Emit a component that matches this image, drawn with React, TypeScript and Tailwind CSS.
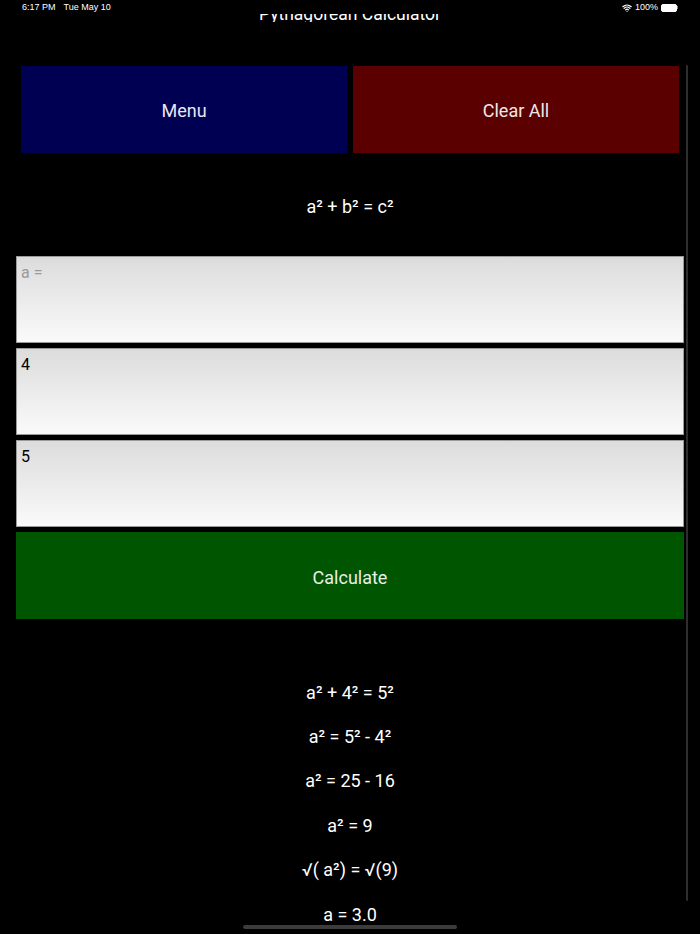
import { Wifi } from "lucide-react";

const steps = ["a² + 4² = 5²", "a² = 5² - 4²", "a² = 25 - 16", "a² = 9", "√( a²) = √(9)", "a = 3.0"];

const fieldClass =
  "h-[87px] w-full border border-[#9a9a9a] bg-gradient-to-b from-[#dcdcdc] to-[#fafafa] px-[4px] pt-[6px] text-[16px] leading-[19px]";

function StatusBar() {
  return (
    <div className="flex h-[14px] items-center justify-between pl-[22px] pr-[22px] pt-[1px] font-['Liberation_Sans',sans-serif] text-[9px] text-white">
      <div className="flex gap-[8px]">
        <span>6:17 PM</span>
        <span>Tue May 10</span>
      </div>
      <div className="flex items-center gap-[3px]">
        <Wifi size={10} strokeWidth={3} />
        <span>100%</span>
        <div className="flex items-center">
          <div className="h-[8px] w-[16px] rounded-[2px] border border-white bg-white" />
          <div className="h-[3px] w-[1px] bg-[#888]" />
        </div>
      </div>
    </div>
  );
}

export default function App() {
  return (
    <div className="relative h-[934px] w-[700px] overflow-hidden bg-black font-['Roboto',sans-serif] text-white">
      <StatusBar />

      {/* title is scrolled under the status bar */}
      <div className="h-[8px] overflow-hidden">
        <div className="-mt-[10px] text-center text-[17.5px] leading-[20px]">Pythagorean Calculator</div>
      </div>

      <div className="mt-[44px] flex gap-[6px] px-[21px]">
        <button className="flex h-[87px] flex-1 items-center justify-center bg-[#000052] pt-[1px] text-[18px] text-[#e8e8f0]">
          Menu
        </button>
        <button className="flex h-[87px] flex-1 items-center justify-center bg-[#5a0000] pt-[1px] text-[18px] text-[#f0e8e8]">
          Clear All
        </button>
      </div>

      <div className="flex h-[103px] items-center justify-center pt-[4px] text-[18px]">a² + b² = c²</div>

      <div className="flex flex-col gap-[5px] px-[16px]">
        <div className={`${fieldClass} text-[#9a9a9a]`}>a =</div>
        <div className={`${fieldClass} text-black`}>4</div>
        <div className={`${fieldClass} text-black`}>5</div>
        <button className="flex h-[87px] w-full items-center justify-center bg-[#005500] pt-[3px] text-[18px] text-[#e8f0e8]">
          Calculate
        </button>
      </div>

      <div className="mt-[51px] flex flex-col">
        {steps.map((s) => (
          <div key={s} className="flex h-[44.4px] items-center justify-center text-[18px]">
            {s}
          </div>
        ))}
      </div>

      {/* scroll indicator */}
      <div className="absolute left-[686px] top-[65px] h-[836px] w-[2px] rounded-full bg-[#2e2e2e]" />
      {/* home indicator */}
      <div className="absolute left-[243px] top-[925px] h-[4px] w-[214px] rounded-full bg-[#3c3c3c]" />
    </div>
  );
}
